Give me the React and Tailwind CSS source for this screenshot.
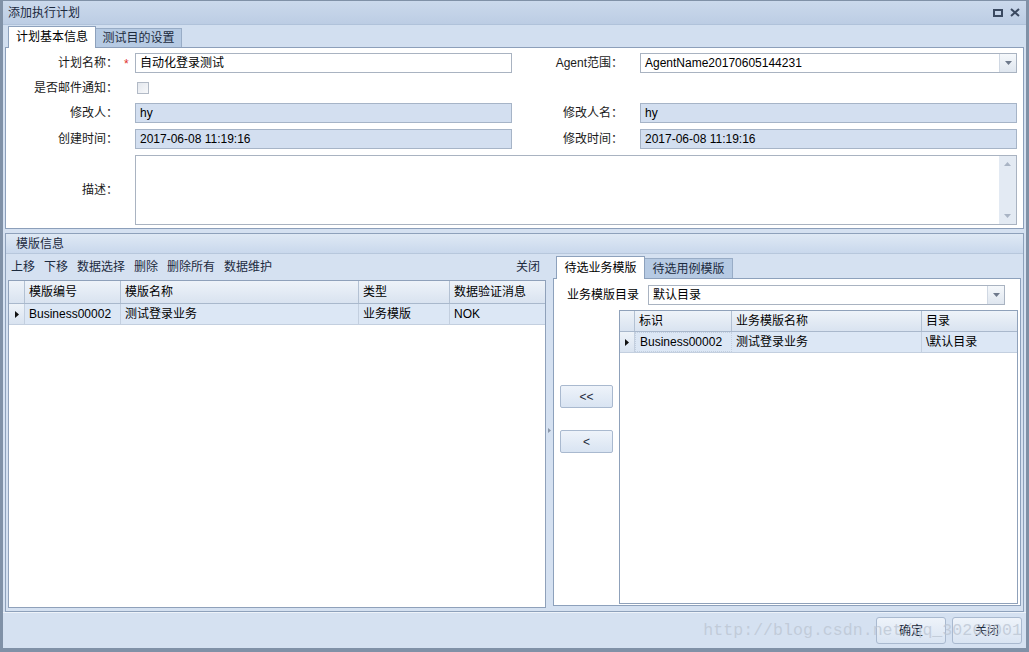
import React from 'react'

const font = "font-['Liberation_Sans','Noto_Sans_CJK_SC',sans-serif]"

function RowArrow() {
  return (
    <svg width="4" height="7" viewBox="0 0 4 7">
      <path d="M0 0L4 3.5L0 7Z" fill="#111" />
    </svg>
  )
}

function DropButton() {
  return (
    <div className="w-[17px] h-full border-l border-[#d0d8e3] bg-linear-to-b from-[#f5f8fb] to-[#dfe6ef] flex items-center justify-center">
      <svg width="7" height="4" viewBox="0 0 7 4">
        <path d="M0 0H7L3.5 4Z" fill="#6e798b" />
      </svg>
    </div>
  )
}

function Field({ value, disabled, combo, className = '' }) {
  return (
    <div
      className={`h-[20px] border flex items-center ${
        disabled ? 'bg-[#d3dff0] border-[#a6b4c7]' : 'bg-white border-[#a9b3c1]'
      } ${className}`}
    >
      <span className="flex-1 pl-[4px] truncate">{value}</span>
      {combo && <DropButton />}
    </div>
  )
}

function Label({ children, className = '' }) {
  return <div className={`text-right text-[#1a1a1a] ${className}`}>{children}</div>
}

function Grid({ cols, headers, cells, className = '', headClass, rowClass, focusFirst }) {
  return (
    <div className={`border border-[#8fa1ba] bg-white flex flex-col ${className}`}>
      <div className={`flex border-b border-[#a9b8cc] bg-linear-to-b from-[#eef3f9] to-[#d9e3f0] ${headClass}`}>
        {headers.map((h, i) => (
          <div
            key={i}
            className={`${cols[i]} shrink-0 border-r border-[#b3c1d3] pl-[4px] flex items-center last:border-r-0`}
          >
            {h}
          </div>
        ))}
      </div>
      <div className={`flex border-b border-[#c3cfdf] bg-[#dce7f5] ${rowClass}`}>
        {cells.map((c, i) => (
          <div
            key={i}
            className={`${cols[i]} shrink-0 border-r border-[#c3cfdf] flex items-center last:border-r-0 ${
              i === 0 ? 'justify-center bg-linear-to-b from-[#eef3f9] to-[#d9e3f0]' : 'pl-[4px]'
            } ${focusFirst && i === 1 ? 'border border-dotted border-[#333] pl-[3px]' : ''}`}
          >
            {i === 0 ? <RowArrow /> : c}
          </div>
        ))}
      </div>
    </div>
  )
}

function SmallButton({ children, className = '' }) {
  return (
    <div
      className={`border border-[#a9b9cf] rounded-[2px] bg-linear-to-b from-[#eef3fa] to-[#d9e4f2] flex items-center justify-center text-[#1d2a3c] ${className}`}
    >
      {children}
    </div>
  )
}

export default function App() {
  return (
    <div
      className={`w-[1029px] h-[652px] flex flex-col bg-[#d5e1f1] border-[3px] border-t border-b-4 border-[#8091a7] text-[12px] text-black ${font} relative overflow-hidden`}
    >
      {/* title bar */}
      <div className="h-[24px] flex items-center justify-between bg-linear-to-b from-[#cbd9ec] to-[#bccde4] border-b border-[#b0c2da]">
        <span className="pl-[5px] text-[#1c2a3e]">添加执行计划</span>
        <div className="flex items-center gap-[7px] pr-[6px]">
          <svg width="10" height="8" viewBox="0 0 10 8">
            <rect x="1" y="1" width="8" height="6" fill="none" stroke="#3a4960" strokeWidth="2" />
          </svg>
          <svg width="10" height="9" viewBox="0 0 10 9">
            <path d="M1 1L9 8M9 1L1 8" stroke="#3a4960" strokeWidth="2" />
          </svg>
        </div>
      </div>

      {/* tabs */}
      <div className="h-[22px] flex items-end pl-[5px] bg-[#d2dff0]">
        <div className="h-[22px] w-[88px] border border-b-0 border-[#8da1bc] bg-white flex items-center justify-center relative z-10 -mb-px pb-px">
          计划基本信息
        </div>
        <div className="h-[19px] w-[86px] border border-l-0 border-b-0 border-[#98acc6] bg-[#b6cae3] flex items-center justify-center text-[#1c2a3e]">
          测试目的设置
        </div>
      </div>

      {/* top form panel */}
      <div className="mx-[2px] h-[182px] border border-[#8c9fba] bg-white pt-[5px] flex flex-col">
        <div className="flex items-center h-[20px]">
          <Label className="w-[112px]">计划名称：</Label>
          <div className="w-[17px] text-[#e0302c] pl-[6px] pt-[2px]">*</div>
          <Field value="自动化登录测试" className="w-[377px]" />
          <Label className="w-[111px]">Agent范围：</Label>
          <div className="w-[17px]" />
          <Field value="AgentName20170605144231" combo className="w-[377px]" />
        </div>
        <div className="flex items-center h-[20px] mt-[5px]">
          <Label className="w-[112px]">是否邮件通知：</Label>
          <div className="w-[19px]" />
          <div className="w-[12px] h-[12px] border border-[#b2bac6] bg-linear-to-br from-[#e4e8ee] to-[#f7f8fa]" />
        </div>
        <div className="flex items-center h-[20px] mt-[5px]">
          <Label className="w-[112px]">修改人：</Label>
          <div className="w-[17px]" />
          <Field value="hy" disabled className="w-[377px]" />
          <Label className="w-[111px]">修改人名：</Label>
          <div className="w-[17px]" />
          <Field value="hy" disabled className="w-[377px]" />
        </div>
        <div className="flex items-center h-[20px] mt-[6px]">
          <Label className="w-[112px]">创建时间：</Label>
          <div className="w-[17px]" />
          <Field value="2017-06-08 11:19:16" disabled className="w-[377px]" />
          <Label className="w-[111px]">修改时间：</Label>
          <div className="w-[17px]" />
          <Field value="2017-06-08 11:19:16" disabled className="w-[377px]" />
        </div>
        <div className="flex items-center h-[70px] mt-[6px]">
          <Label className="w-[112px]">描述：</Label>
          <div className="w-[17px]" />
          <div className="w-[882px] h-full border border-[#a9b3c1] bg-white flex justify-end">
            <div className="w-[17px] h-full bg-[#e3eaf3] flex flex-col items-center justify-between py-[6px]">
              <svg width="7" height="4" viewBox="0 0 7 4">
                <path d="M0 4H7L3.5 0Z" fill="#a9b4c4" />
              </svg>
              <svg width="7" height="4" viewBox="0 0 7 4">
                <path d="M0 0H7L3.5 4Z" fill="#a9b4c4" />
              </svg>
            </div>
          </div>
        </div>
      </div>

      {/* template info group */}
      <div className="mx-[2px] mt-[4px] h-[379px] border border-[#8ea1bb] flex flex-col pb-[3px]">
        <div className="h-[20px] shrink-0 flex items-center pl-[10px] bg-linear-to-b from-[#dfe9f5] to-[#c9d8ec] border-b border-[#b7c7dc] text-[#1c2a3e]">
          模版信息
        </div>
        <div className="flex flex-1">
          {/* left */}
          <div className="w-[540px] flex flex-col">
            <div className="h-[26px] flex items-center justify-between pl-[5px] pr-[6px] text-[#1c2a3e]">
              <div className="flex gap-[9px]">
                <span>上移</span>
                <span>下移</span>
                <span>数据选择</span>
                <span>删除</span>
                <span>删除所有</span>
                <span>数据维护</span>
              </div>
              <span>关闭</span>
            </div>
            <Grid
              className="ml-[2px] w-[538px] h-[328px]"
              headClass="h-[23px]"
              rowClass="h-[21px]"
              cols={['w-[16px]', 'w-[96px]', 'w-[238px]', 'w-[91px]', 'w-[95px]']}
              headers={['', '模版编号', '模版名称', '类型', '数据验证消息']}
              cells={['', 'Business00002', '测试登录业务', '业务模版', 'NOK']}
            />
          </div>

          {/* splitter */}
          <div className="w-[7px] flex items-center justify-center pb-[2px]">
            <svg width="3" height="5" viewBox="0 0 3 5">
              <path d="M0 0L3 2.5L0 5Z" fill="#8a97aa" />
            </svg>
          </div>

          {/* right */}
          <div className="w-[469px] flex flex-col">
            <div className="h-[24px] flex items-end pl-[3px]">
              <div className="h-[23px] w-[89px] border border-b-0 border-[#8da1bc] bg-white flex items-center justify-center relative z-10 -mb-px pb-px">
                待选业务模版
              </div>
              <div className="h-[20px] w-[88px] border border-l-0 border-b-0 border-[#98acc6] bg-[#b6cae3] flex items-center justify-center text-[#1c2a3e]">
                待选用例模版
              </div>
            </div>
            <div className="w-[468px] h-[328px] border border-[#8da1bc] bg-white flex flex-col">
              <div className="flex items-center pt-[6px] pl-[13px]">
                <span className="w-[81px]">业务模版目录</span>
                <Field value="默认目录" combo className="w-[357px]" />
              </div>
              <div className="flex flex-1 mt-[5px] pr-[2px]">
                <div className="w-[65px] flex flex-col pl-[6px] pt-[75px] gap-[22px]">
                  <SmallButton className="w-[53px] h-[23px]">&lt;&lt;</SmallButton>
                  <SmallButton className="w-[53px] h-[23px]">&lt;</SmallButton>
                </div>
                <Grid
                  className="w-[399px] h-[294px]"
                  headClass="h-[21px]"
                  rowClass="h-[21px]"
                  focusFirst
                  cols={['w-[15px]', 'w-[97px]', 'w-[190px]', 'w-[95px]']}
                  headers={['', '标识', '业务模版名称', '目录']}
                  cells={['', 'Business00002', '测试登录业务', '\\默认目录']}
                />
              </div>
            </div>
          </div>
        </div>
      </div>

      {/* footer */}
      <div className="flex-1 flex items-center justify-end gap-[6px] pr-[4px] border-t border-[#eef3fa] relative">
        <SmallButton className="w-[70px] h-[27px] rounded-[3px]">确定</SmallButton>
        <SmallButton className="w-[70px] h-[27px] rounded-[3px]">关闭</SmallButton>
        <span className="absolute right-[4px] top-[8px] pointer-events-none font-['Liberation_Mono',monospace] text-[16.6px] leading-[20px] text-[#bcc6d3]/80">
          http://blog.csdn.net/qq_30262001
        </span>
      </div>
    </div>
  )
}
